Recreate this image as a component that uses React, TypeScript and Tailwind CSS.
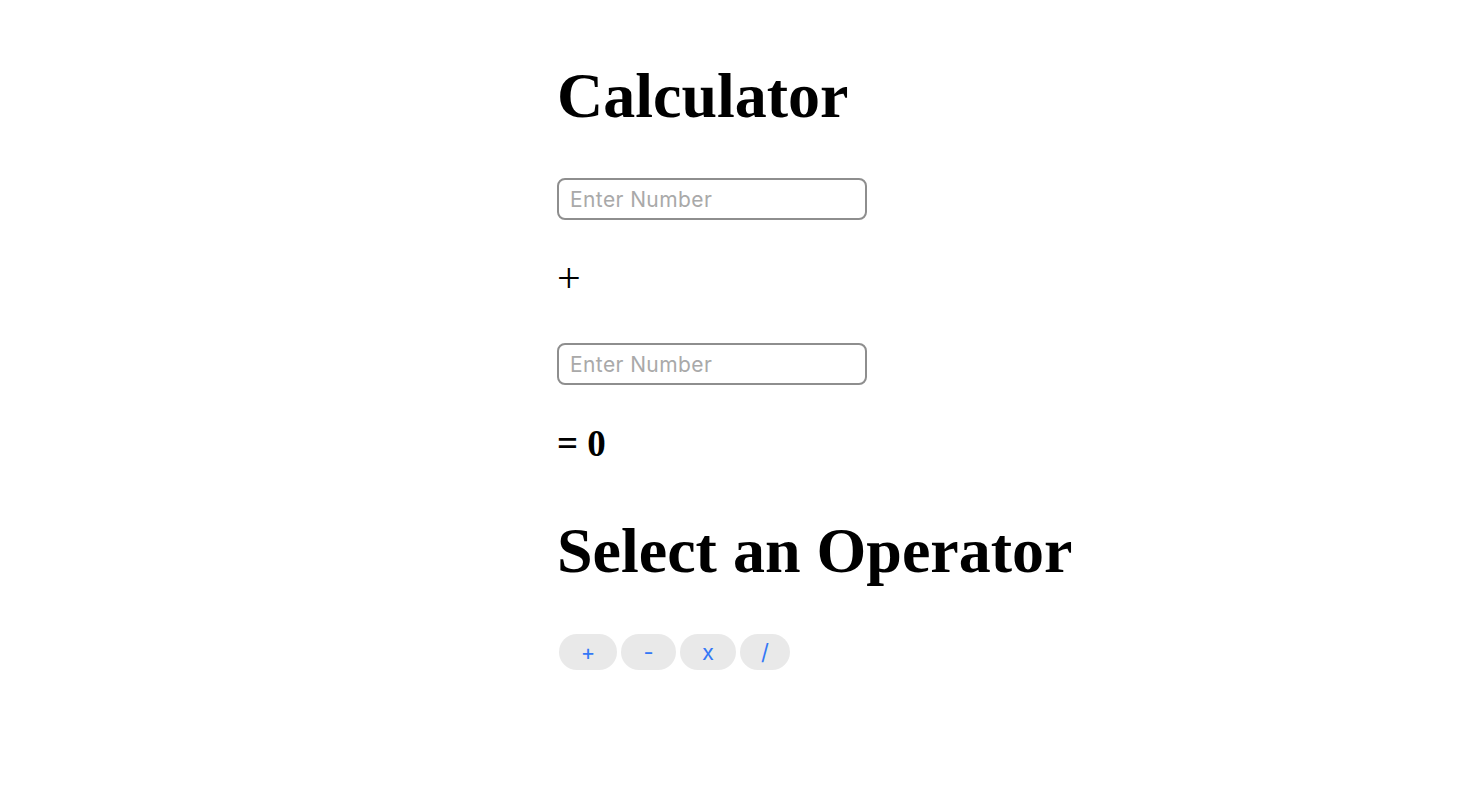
export default function App() {
  const serif = { fontFamily: '"Liberation Serif", "Times New Roman", serif' };
  const sans = { fontFamily: 'Inter, "Noto Sans", sans-serif' };
  return (
    <div className="min-h-screen bg-white" style={serif}>
      <div className="w-[350px] mx-auto pt-[59px]">
        <h1 className="text-[64px] font-bold leading-[74px] text-black whitespace-nowrap m-0">Calculator</h1>
        <input
          type="number"
          placeholder="Enter Number"
          className="block mt-[45px] w-[310px] h-[42px] border-2 border-[#8e8e8e] rounded-[8px] px-[11px] text-[21px] tracking-[0.4px] text-black placeholder:text-[#a9a9a9] outline-none"
          style={sans}
        />
        <p className="text-[42px] leading-[48px] mt-[34px] text-black">+</p>
        <input
          type="number"
          placeholder="Enter Number"
          className="block mt-[41px] w-[310px] h-[42px] border-2 border-[#8e8e8e] rounded-[8px] px-[11px] text-[21px] tracking-[0.4px] text-black placeholder:text-[#a9a9a9] outline-none"
          style={sans}
        />
        <h3 className="text-[37px] font-bold leading-[43px] mt-[37px] text-black">= 0</h3>
        <h1 className="text-[64px] font-bold leading-[74px] mt-[49px] text-black whitespace-nowrap">Select an Operator</h1>
        <div className="flex gap-[4px] mt-[46px] ml-[2px]" style={sans}>
          {["+", "-", "x", "/"].map((op, i) => (
            <button
              key={op}
              className={`h-[36px] rounded-full bg-[#e9e9e9] text-[#3478f6] text-[22px] leading-none ${["w-[58px]", "w-[55px]", "w-[56px]", "w-[50px]"][i]}`}
            >
              {op}
            </button>
          ))}
        </div>
      </div>
    </div>
  );
}
